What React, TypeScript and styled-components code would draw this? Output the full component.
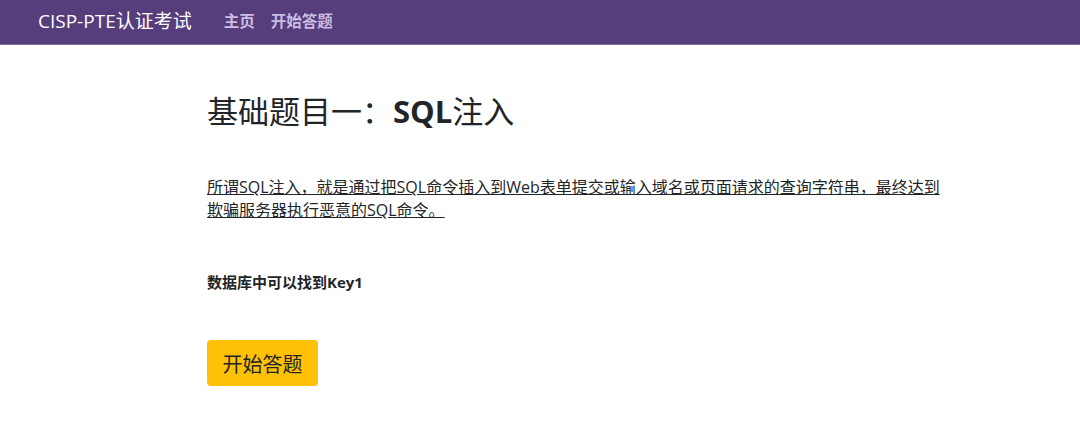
import styled, { createGlobalStyle } from 'styled-components';

const GlobalStyle = createGlobalStyle`
  html, body {
    margin: 0;
    padding: 0;
    background: #fff;
  }
  body {
    font-family: "Open Sans", "Noto Sans CJK SC", sans-serif;
    color: #212529;
  }
`;

const Navbar = styled.nav`
  height: 45px;
  background: #563d7c;
  border-bottom: 1px solid #7d68a0;
  box-sizing: border-box;
  display: flex;
  align-items: center;
  padding: 0 0 4px 38px;
`;

const Brand = styled.a`
  font-size: 19px;
  color: #fff;
  text-decoration: none;
  margin-right: 32px;
`;

const NavLinks = styled.div`
  display: flex;
  gap: 16px;
`;

const NavLink = styled.a`
  font-size: 15.5px;
  font-weight: 700;
  color: #cbbde2;
  text-decoration: none;
`;

const Main = styled.main`
  padding: 48px 0 0 207px;
  width: 740px;
`;

const Title = styled.h1`
  font-size: 31px;
  font-weight: 400;
  line-height: 1.2;
  margin: 0 0 46px;
  color: #212529;
`;

const Description = styled.a`
  display: block;
  font-size: 16px;
  line-height: 23px;
  color: #212529;
  text-decoration: underline;
  margin-bottom: 49px;
`;

const Hint = styled.p`
  font-size: 15px;
  font-weight: 700;
  margin: 0 0 48px;
`;

const StartButton = styled.button`
  width: 111px;
  height: 46px;
  background: #ffc107;
  border: none;
  border-radius: 4px;
  font-family: inherit;
  font-size: 20px;
  color: #212529;
  cursor: pointer;
`;

export default function App() {
  return (
    <>
      <GlobalStyle />
      <Navbar>
        <Brand href="#">CISP-PTE认证考试</Brand>
        <NavLinks>
          <NavLink href="#">主页</NavLink>
          <NavLink href="#">开始答题</NavLink>
        </NavLinks>
      </Navbar>
      <Main>
        <Title>
          基础题目一：<b>SQL</b>注入
        </Title>
        <Description href="#">
          所谓SQL注入，就是通过把SQL命令插入到Web表单提交或输入域名或页面请求的查询字符串，最终达到欺骗服务器执行恶意的SQL命令。
        </Description>
        <Hint>数据库中可以找到Key1</Hint>
        <StartButton>开始答题</StartButton>
      </Main>
    </>
  );
}
